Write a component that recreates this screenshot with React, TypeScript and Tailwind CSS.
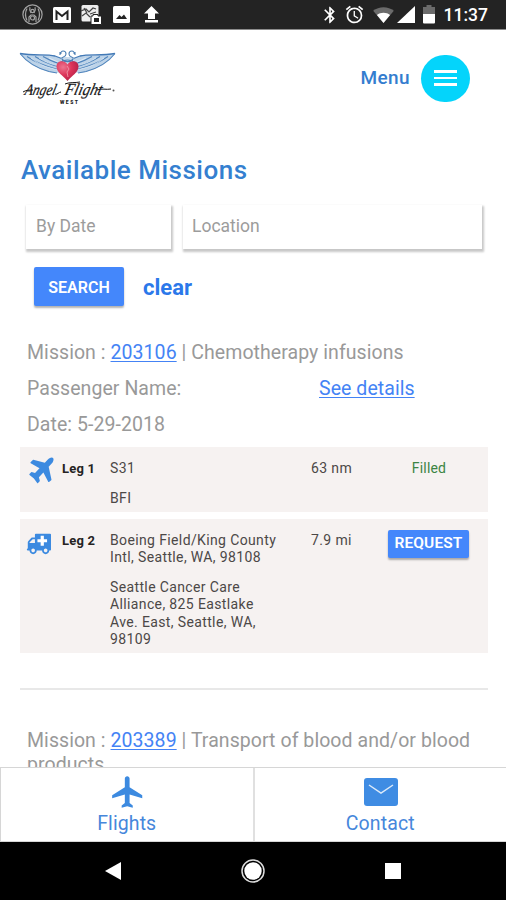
import type { ReactNode } from "react";
import { MdAlarm, MdBluetooth, MdFlight } from "react-icons/md";

interface Leg {
  id: number;
  kind: "air" | "ground";
  from: string;
  to: string;
  distance: string;
  filled: boolean;
}

const LEGS: Leg[] = [
  { id: 1, kind: "air", from: "S31", to: "BFI", distance: "63 nm", filled: true },
  {
    id: 2,
    kind: "ground",
    from: "Boeing Field/King County Intl, Seattle, WA, 98108",
    to: "Seattle Cancer Care Alliance, 825 Eastlake Ave. East, Seattle, WA, 98109",
    distance: "7.9 mi",
    filled: false,
  },
];

function StatusBar() {
  return (
    <div className="flex h-[30px] shrink-0 items-center border-b border-[#8c8c8c] bg-[#232323] pl-[22px] pr-[18px] text-white">
      <svg width="21" height="21" viewBox="0 0 21 21" fill="none" stroke="#a3a3a3" strokeWidth="1.2">
        <circle cx="10.5" cy="10.5" r="9.6" />
        <path d="M8 3.2c-1 3 0 4.5 1 5.8M13 3.2c1 3 0 4.5-1 5.8M7 18v-5l2-2h3l2 2v5M5 4.5c-2 4-2 8 0 12M16 4.5c2 4 2 8 0 12" />
        <circle cx="10.5" cy="7" r="1.7" />
        <circle cx="10.5" cy="14" r="2" />
      </svg>
      <svg className="ml-[10px]" width="18" height="16" viewBox="0 0 18 16">
        <rect width="18" height="16" rx="1.5" fill="#fff" />
        <path d="M3.500 13V4.500L9 9l5.500-4.500V13" fill="none" stroke="#232323" strokeWidth="2" />
      </svg>
      <svg className="ml-[10px]" width="21" height="21" viewBox="0 0 21 21">
        <rect x="0.5" y="1" width="17" height="16.5" rx="1.5" fill="#eee" />
        <path d="M0 7l5-2 3 3 4-4 3 1M1 12l4-3 4 4M3 4l3 5M9 10l6-2" stroke="#444" strokeWidth="1.2" fill="none" />
        <path d="M10 12h2v-1.500h5V12h3.500v8.500H10z" fill="#fff" stroke="#232323" strokeWidth="1" />
        <rect x="13" y="14" width="5" height="4" fill="#232323" />
      </svg>
      <svg className="ml-[11px]" width="17" height="17" viewBox="0 0 17 17">
        <rect width="17" height="17" rx="1.5" fill="#fff" />
        <path d="M3 13l3.500-4 2 2 2.500-2.500 3 4.500z" fill="#232323" />
      </svg>
      <svg className="ml-[14px]" width="15" height="17" viewBox="0 0 15 17" fill="#fff">
        <path d="M7.500 0L15 7.500h-4V13H4V7.500H0zM1 14h13v2.500H1z" />
      </svg>
      <div className="flex-1" />
      <MdBluetooth size={20} />
      <MdAlarm size={21} className="ml-[4px]" />
      <svg className="ml-[8px]" width="21" height="16" viewBox="0 0 22 17">
        <path d="M0 4C6-1 16-1 22 4L11 17z" fill="#6b6b6b" />
        <path d="M4 8.500c4-3.300 10-3.300 14 0L11 17z" fill="#fff" />
      </svg>
      <svg className="ml-[3px]" width="18" height="17" viewBox="0 0 18 17">
        <path d="M18 0v17H0z" fill="#fff" />
      </svg>
      <svg className="ml-[8px]" width="12" height="19" viewBox="0 0 12 19">
        <path d="M3.500 0h5v2H12v7H0V2h3.500z" fill="#6b6b6b" />
        <path d="M0 9h12v8.500q0 1-1 1H1q-1 0-1-1z" fill="#fff" />
      </svg>
      <span className="ml-[9px] pt-[2px] text-[17.500px] font-medium leading-none">11:37</span>
    </div>
  );
}

function Wing() {
  return (
    <g>
      <path d="M1 4.500C14 7 27 5 36 7l8 3 0 13-8 1C20 22 8 13 1 4.500z" fill="#bdd3e8" />
      <path d="M1 4.500C14 7 27 5 36 7l8 3" fill="none" stroke="#4279b6" strokeWidth="1.3" />
      <path
        d="M1 4.500c7 9 18 15 29 18l8 1.500M8 7.500c10 7 19 10 31 13M16 7.500c8 5 14 8 24 10M24 7.500c5 3 10 5 16 7"
        fill="none"
        stroke="#4f84bc"
        strokeWidth="1.1"
      />
      <path d="M12 9c10 8 16 9 27 12M20 9c6 4 12 6 20 8M30 9l9 4" fill="none" stroke="#eaf3fa" strokeWidth="0.7" />
    </g>
  );
}

function Logo() {
  return (
    <svg width="100" height="58" viewBox="0 0 100 58">
      <defs>
        <radialGradient id="heart" cx="0.3" cy="0.3" r="0.8">
          <stop offset="0" stopColor="#ee7590" />
          <stop offset="0.5" stopColor="#dc3459" />
          <stop offset="1" stopColor="#b01e45" />
        </radialGradient>
      </defs>
      <g transform="translate(1 0)">
        <Wing />
      </g>
      <g transform="translate(98 0) scale(-1 1)">
        <Wing />
      </g>
      <path d="M43 8h13v9H43z" fill="#c9dbec" />
      <path
        d="M43 5c-1-4 5-4 5 0s-5 2-4 5 8 4 11 0M56 5c1-4-5-4-5 0s5 2 4 5-8 4-11 0M42 14c4-4 11-4 15 0M42 3v3M57 3v3"
        fill="none"
        stroke="#4d80b5"
        strokeWidth="1.1"
      />
      <path d="M49.500 32C45 26.500 38.500 23.500 38.500 17.500c0-6 8-7 11-2 3-5 11-4 11 2 0 6-6.500 9-11 14.500z" fill="url(#heart)" />
      <path d="M49 17l2 3-2 3 1 5" stroke="#f0a0b0" strokeWidth="0.8" fill="none" />
      <g
        transform="translate(0 46) skewX(-14)"
        fill="#161616"
        stroke="#161616"
        strokeWidth="0.2"
        fontFamily="Liberation Serif, serif"
        fontStyle="italic"
      >
        <text x="6" y="0" fontSize="16" textLength="31" lengthAdjust="spacingAndGlyphs">Angel</text>
        <text x="46" y="0" fontSize="17" textLength="37" lengthAdjust="spacingAndGlyphs">Flight</text>
      </g>
      <path d="M5 43c3-2 6-2 10-2M37 45c2 1 4-2 6-2M47 35c4-2 10-1 15-2M79 41c5-2 9 0 14-1" fill="none" stroke="#161616" strokeWidth="1" />
      <circle cx="95.500" cy="41.500" r="1" fill="#555" />
      <text x="42" y="54.500" fontSize="5" fontWeight="900" fill="#222" textLength="18" fontFamily="Roboto, sans-serif">WEST</text>
    </svg>
  );
}

function Header() {
  return (
    <header className="flex h-[96px] items-center pl-[18px] pr-[36px]">
      <Logo />
      <span className="ml-auto text-[19px] font-medium tracking-[0.4px] text-[#347dcf]">Menu</span>
      <button className="ml-[11px] flex h-[47px] w-[49px] flex-col items-center justify-center gap-[4px] rounded-full bg-[#04d4fb]">
        <span className="h-[2.500px] w-[23px] bg-white" />
        <span className="h-[2.500px] w-[23px] bg-white" />
        <span className="h-[2.500px] w-[23px] bg-white" />
      </button>
    </header>
  );
}

function PlaneIcon() {
  return (
    <svg width="31" height="33" viewBox="0 0 1792 1792" preserveAspectRatio="none" fill="#3c8ae0">
      <path d="M1568 160q44 52 12 148t-108 172l-161 161 160 696q5 19-12 33l-128 96q-7 6-19 6-4 0-7-1-15-3-21-16l-279-508-259 259 53 194q5 17-8 31l-96 96q-9 9-23 9h-2q-15-2-24-13l-189-252-252-189q-11-7-13-23-1-13 9-25l96-97q9-9 23-9 6 0 8 1l194 53 259-259-508-279q-14-8-17-24-2-16 9-27l128-128q14-13 30-8l665 159 160-160q76-76 172-108t148 12z" />
    </svg>
  );
}

function AmbulanceIcon() {
  return (
    <svg width="25" height="26" viewBox="0 0 1792 1792" preserveAspectRatio="none" fill="#3c8ae0">
      <path d="M640 1408q0-52-38-90t-90-38-90 38-38 90 38 90 90 38 90-38 38-90zm-384-512h384v-256h-158q-13 0-22 9l-195 195q-9 9-9 22v30zm1280 512q0-52-38-90t-90-38-90 38-38 90 38 90 90 38 90-38 38-90zm256-1088v1024q0 15-4 26.500t-13.500 18.500-16.500 11.500-23.500 6-22.500 2-25.500 0-22.500-.500q0 106-75 181t-181 75-181-75-75-181h-384q0 106-75 181t-181 75-181-75-75-181h-64q-3 0-22.500.500t-25.500 0-22.500-2-23.500-6-16.500-11.500-13.500-18.500-4-26.500q0-26 19-45t45-19v-320q0-8-.500-35t0-38 2.500-34.500 6.500-37 14-30.500 22.500-30l198-198q19-19 50.500-32t58.500-13h160v-192q0-26 19-45t45-19h1024q26 0 45 19t19 45z" />
      <path d="M1050 400h230v230h230v220h-230v230h-230V850H820V630h230z" fill="#fff" />
    </svg>
  );
}

function LegCard({ leg }: { leg: Leg }) {
  return (
    <div
      className={`flex bg-[#f6f2f1] text-[14px] leading-[17.300px] tracking-[0.37px] text-[#4c4847] ${
        leg.kind === "air" ? "h-[65px]" : "h-[134px]"
      }`}
    >
      <div className="w-[42px] shrink-0 pl-[6px]">
        {leg.kind === "air" ? (
          <div className="pt-[8px]"><PlaneIcon /></div>
        ) : (
          <div className="pt-[11px]"><AmbulanceIcon /></div>
        )}
      </div>
      <div className="w-[48px] shrink-0 pt-[13px] text-[13px] font-bold tracking-[0.2px] text-[#252323]">Leg {leg.id}</div>
      <div className="w-[175px] shrink-0 pr-[5px] pt-[13px]">
        <p>{leg.from}</p>
        <p className="mt-[12.400px]">{leg.to}</p>
      </div>
      <div className="w-[94px] shrink-0 pl-[26px] pt-[13px]">{leg.distance}</div>
      <div className="flex w-[100px] justify-center">
        {leg.filled ? (
          <span className="pt-[13px] tracking-[0.2px] text-[#3c8443]">Filled</span>
        ) : (
          <button className="mr-[1px] mt-[11px] h-[28px] w-[81px] rounded-[2px] bg-[#4487fb] text-[15.500px] font-semibold text-white shadow-[0_2px_2px_rgba(0,0,0,0.3)] tracking-[0.1px]">
            REQUEST
          </button>
        )}
      </div>
    </div>
  );
}

function MissionTitle({ id, children }: { id: string; children: ReactNode }) {
  return (
    <p>
      Mission : <a className="text-[#4483f5] underline decoration-1 underline-offset-2">{id}</a> | {children}
    </p>
  );
}

function BottomTab({ icon, label }: { icon: ReactNode; label: string }) {
  return (
    <div className="flex flex-1 flex-col items-center">
      <div className="flex h-[42px] items-center pl-[2px] pt-[6px]">{icon}</div>
      <span className="pt-px text-[19.500px] leading-[26px] tracking-[0.1px] text-[#4687db]">{label}</span>
    </div>
  );
}

export default function App() {
  return (
    <div className="flex h-[900px] w-[506px] flex-col overflow-hidden bg-white font-['Roboto',sans-serif]">
      <StatusBar />
      <main className="min-h-0 flex-1 overflow-hidden">
        <Header />
        <h1 className="pl-[21px] pt-[28px] text-[26px] font-medium leading-[32px] tracking-[0.5px] text-[#347fd0]">
          Available Missions
        </h1>

        {/* Search form */}
        <div className="mt-[19px] flex gap-[12px] pl-[26px] text-[17.500px] text-[#9c9c9c]">
          <div className="flex h-[44px] w-[145px] items-center pb-px pl-[10px] shadow-[1px_2px_2px_1px_rgba(0,0,0,0.22)]">By Date</div>
          <div className="flex h-[44px] w-[299px] items-center pb-px pl-[9px] shadow-[1px_2px_2px_1px_rgba(0,0,0,0.22)]">Location</div>
        </div>
        <div className="mt-[18px] flex h-[39px] items-center pl-[34px]">
          <button className="h-[39px] w-[90px] rounded-[2px] bg-[#4487fb] pt-[2px] text-[16px] font-semibold text-white shadow-[0_2px_2px_rgba(0,0,0,0.3)]">
            SEARCH
          </button>
          <span className="ml-[19px] pt-px text-[22px] font-bold text-[#2b78ea]">clear</span>
        </div>

        {/* Mission list */}
        <section className="mt-[29px] pl-[27px] text-[19.500px] leading-[36px] tracking-[0.06px] text-[#999]">
          <MissionTitle id="203106">Chemotherapy infusions</MissionTitle>
          <div className="flex">
            <span className="w-[292px]">Passenger Name:</span>
            <a className="text-[#4483f5] underline decoration-1 underline-offset-2">See details</a>
          </div>
          <p className="h-[35px]">Date: 5-29-2018</p>
        </section>
        <div className="ml-[20px] mt-[5px] flex w-[468px] flex-col gap-[7px]">
          {LEGS.map((leg) => (
            <LegCard key={leg.id} leg={leg} />
          ))}
        </div>
        <div className="ml-[20px] mt-[35px] h-[2px] w-[468px] bg-[#e8e8e8]" />
        <section className="mt-[39px] pl-[27px] pr-[20px] text-[19.500px] leading-[24px] tracking-[0.06px] text-[#999]">
          <MissionTitle id="203389">Transport of blood and/or blood products</MissionTitle>
        </section>
      </main>

      {/* Bottom tabs */}
      <nav className="flex h-[75px] shrink-0 border-b border-l border-t border-[#d6d6d6]">
        <BottomTab icon={<MdFlight size={38} color="#3c8ae0" />} label="Flights" />
        <div className="w-[2px] bg-[#e0e0e0]" />
        <BottomTab
          icon={
            <svg width="34" height="28" viewBox="0 0 34 28">
              <rect width="34" height="28" rx="3" fill="#3f8ce3" />
              <path d="M5 7l12 8 12-8" fill="none" stroke="#dceaf9" strokeWidth="1.5" />
            </svg>
          }
          label="Contact"
        />
      </nav>

      {/* System navigation */}
      <div className="flex h-[58px] shrink-0 items-center bg-black pl-[105px]">
        <svg width="16" height="18" viewBox="0 0 16 18">
          <path d="M16 0v18L0 9z" fill="#fff" />
        </svg>
        <svg className="ml-[120px]" width="24" height="24" viewBox="0 0 24 24">
          <circle cx="12" cy="12" r="11" fill="none" stroke="#ddd" strokeWidth="1.5" />
          <circle cx="12" cy="12" r="8.7" fill="#fff" />
        </svg>
        <div className="ml-[120px] size-[16px] bg-white" />
      </div>
    </div>
  );
}
